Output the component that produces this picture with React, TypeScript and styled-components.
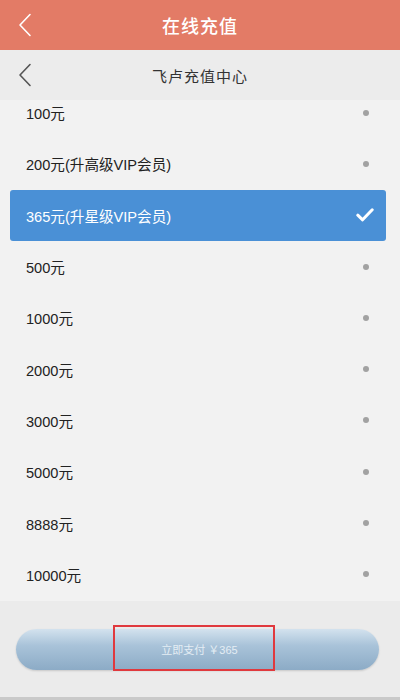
import styled, { createGlobalStyle } from 'styled-components';

const GlobalStyle = createGlobalStyle`
	html, body {
		margin: 0;
		padding: 0;
		background: #f2f2f2;
		font-family: 'Liberation Sans', 'Noto Sans CJK SC', sans-serif;
	}
`;

const Page = styled.div`
	width: 400px;
	height: 700px;
	display: flex;
	flex-direction: column;
	overflow: hidden;
	background: #f2f2f2;
`;

const TitleBar = styled.div`
	height: 50px;
	flex: none;
	background: #e37b66;
	display: grid;
	grid-template-columns: 50px 1fr 50px;
	align-items: center;
`;

const TitleText = styled.h1`
	margin: 0;
	text-align: center;
	color: #fff;
	font-size: 18px;
	font-weight: 500;
	letter-spacing: 1px;
`;

const BackButton = styled.div`
	display: flex;
	align-items: center;
	justify-content: center;
`;

const SubBar = styled.div`
	height: 50px;
	flex: none;
	background: #ececec;
	display: grid;
	grid-template-columns: 50px 1fr 50px;
	align-items: center;
`;

const SubTitle = styled.div`
	text-align: center;
	color: #333;
	font-size: 15px;
	letter-spacing: 1px;
`;

const ListArea = styled.div`
	flex: 1;
	overflow: hidden;
	background: #f2f2f2;
`;

const List = styled.ul`
	list-style: none;
	margin: -13px 0 0;
	padding: 0 14px 0 10px;
	display: flex;
	flex-direction: column;
`;

const Option = styled.li<{ $active?: boolean }>`
	height: 51.3px;
	display: flex;
	align-items: center;
	justify-content: space-between;
	padding: 0 12px 0 16px;
	border-radius: 3px;
	font-size: 14.6px;
	color: ${(p) => (p.$active ? '#fff' : '#222')};
	background: ${(p) => (p.$active ? '#4a90d6' : 'transparent')};
`;

const Dot = styled.span`
	width: 6px;
	height: 6px;
	border-radius: 50%;
	background: #a2a2a2;
	margin-right: 5px;
`;

const Footer = styled.div`
	height: 96px;
	flex: none;
	background: #ebebeb;
	border-bottom: 3px solid #c9c9c9;
	display: flex;
	align-items: center;
	padding: 0 21px 0 16px;
`;

const PayButton = styled.button`
	position: relative;
	flex: 1;
	height: 41px;
	border: none;
	border-radius: 21px;
	background: linear-gradient(to bottom, #d3e2ee 0%, #a9c3d9 40%, #8cabc6 100%);
	box-shadow: 0 1px 2px rgba(0, 0, 0, 0.15);
	color: #e4edf4;
	font-family: inherit;
	font-size: 11px;
	display: flex;
	align-items: center;
	justify-content: center;
	padding-right: 2px;
`;

const Highlight = styled.span`
	position: absolute;
	left: 97px;
	top: -4px;
	width: 158px;
	height: 42px;
	border: 2px solid #e0393e;
	pointer-events: none;
`;

const Chevron = ({ color }: { color: string }) => (
	<svg width="14" height="24" viewBox="0 0 14 24" fill="none">
		<path d="M12 1.5 L2 12 L12 22.5" stroke={color} strokeWidth="1.6" strokeLinecap="round" strokeLinejoin="round" />
	</svg>
);

const Check = () => (
	<svg width="18" height="14" viewBox="0 0 18 14" fill="none">
		<path d="M1.8 7.2 L6.6 11.8 L16.2 1.8" stroke="#fff" strokeWidth="3" strokeLinecap="round" strokeLinejoin="round" />
	</svg>
);

const amounts = [
	'100元',
	'200元(升高级VIP会员)',
	'365元(升星级VIP会员)',
	'500元',
	'1000元',
	'2000元',
	'3000元',
	'5000元',
	'8888元',
	'10000元',
];

const App = () => {
	const selected = 2;

	return (
		<Page>
			<GlobalStyle />
			<TitleBar>
				<BackButton>
					<Chevron color="#fff" />
				</BackButton>
				<TitleText>在线充值</TitleText>
				<span />
			</TitleBar>
			<SubBar>
				<BackButton>
					<Chevron color="#555" />
				</BackButton>
				<SubTitle>飞卢充值中心</SubTitle>
				<span />
			</SubBar>
			<ListArea>
				<List>
					{amounts.map((a, i) => (
						<Option key={a} $active={i === selected}>
							<span>{a}</span>
							{i === selected ? <Check /> : <Dot />}
						</Option>
					))}
				</List>
			</ListArea>
			<Footer>
				<PayButton>
					立即支付 ￥365
					<Highlight />
				</PayButton>
			</Footer>
		</Page>
	);
};

export default App;
